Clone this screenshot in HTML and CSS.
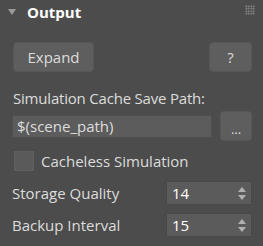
FILE: index.html
```html
<!DOCTYPE html>
<html lang="en">

<head>
    <meta charset="UTF-8">
    <meta name="viewport" content="width=device-width, initial-scale=1.0">
    <title>Output</title>
    <link rel="stylesheet" href="styles.css">
</head>

<body>
    <div class="rollout">
        <div class="rollout-header">
            <span class="arrow"></span>
            <span class="title">Output</span>
            <span class="grip"></span>
        </div>

        <div class="rollout-body">
            <div class="btn-row">
                <button class="btn btn-expand">Expand</button>
                <button class="btn btn-help">?</button>
            </div>

            <div class="field-label">Simulation Cache Save Path:</div>
            <div class="path-row">
                <input class="path-input" type="text" value="$(scene_path)">
                <button class="btn btn-browse">...</button>
            </div>

            <label class="check-row">
                <span class="checkbox"></span>
                <span>Cacheless Simulation</span>
            </label>

            <div class="spin-row">
                <span class="spin-label">Storage Quality</span>
                <div class="spinner">
                    <span class="spin-value">14</span>
                    <span class="spin-arrows"><i class="up"></i><i class="down"></i></span>
                </div>
            </div>

            <div class="spin-row">
                <span class="spin-label">Backup Interval</span>
                <div class="spinner">
                    <span class="spin-value">15</span>
                    <span class="spin-arrows"><i class="up"></i><i class="down"></i></span>
                </div>
            </div>
        </div>
    </div>
</body>

</html>
```

FILE: styles.css
```css
/* Reset */
* {
    margin: 0;
    padding: 0;
    box-sizing: border-box;
}

body {
    font-family: 'Open Sans', 'Noto Sans', sans-serif;
    font-size: 15px;
    color: #dcdcdc;
    background-color: #4c4c4c;
    width: 263px;
    height: 246px;
    overflow: hidden;
}

/* Header */
.rollout-header {
    display: flex;
    align-items: center;
    height: 23px;
    padding-left: 8px;
    padding-right: 8px;
}

.arrow {
    width: 0;
    height: 0;
    border-left: 4px solid transparent;
    border-right: 4px solid transparent;
    border-top: 6px solid #9a9a9a;
    margin-right: 11px;
}

.title {
    font-weight: bold;
    font-size: 15px;
    color: #ffffff;
    flex: 1;
}

.grip {
    width: 10px;
    height: 10px;
    background-image: radial-gradient(#8c8c8c 45%, transparent 50%);
    background-size: 2.5px 2.5px;
    margin-top: -4px;
}

/* Body */
.rollout-body {
    padding: 19px 11px 0 12px;
}

.btn {
    font-family: inherit;
    font-size: 15px;
    color: #dcdcdc;
    background-color: #5e5e5e;
    border: 1px solid #575757;
    border-radius: 4px;
    cursor: pointer;
}

.btn-row {
    display: flex;
    justify-content: space-between;
    padding-left: 1px;
}

.btn-expand {
    width: 81px;
    height: 30px;
}

.btn-help {
    width: 43px;
    height: 30px;
}

.field-label {
    margin-top: 15px;
    line-height: 22px;
    padding-left: 1px;
    letter-spacing: -0.2px;
}

.path-row {
    display: flex;
    align-items: center;
    justify-content: space-between;
    margin-top: 2px;
}

.path-input {
    width: 200px;
    height: 23px;
    font-family: inherit;
    font-size: 15px;
    color: #dcdcdc;
    background-color: #5c5c5c;
    border: 1px solid #505050;
    padding-left: 4px;
    outline: none;
}

.btn-browse {
    width: 32px;
    height: 30px;
    font-size: 13px;
    padding-top: 6px;
}

/* Checkbox */
.check-row {
    display: flex;
    align-items: center;
    margin-top: 10px;
    padding-left: 2px;
    height: 20px;
}

.checkbox {
    width: 20px;
    height: 20px;
    background-color: #5a5a5a;
    border: 1px solid #5f5f5f;
    margin-right: 7px;
}

/* Spinners */
.spin-row {
    display: flex;
    align-items: center;
    justify-content: space-between;
    margin-top: 10px;
}

.spin-row + .spin-row {
    margin-top: 8px;
}

.spinner {
    display: flex;
    align-items: center;
    justify-content: space-between;
    width: 86px;
    height: 24px;
    background-color: #5b5b5b;
    border: 1px solid #484848;
    padding-left: 5px;
    padding-right: 5px;
}

.spin-value {
    color: #ffffff;
}

.spin-arrows {
    display: flex;
    flex-direction: column;
    gap: 3px;
}

.spin-arrows i {
    display: block;
    width: 0;
    height: 0;
    border-left: 4.5px solid transparent;
    border-right: 4.5px solid transparent;
}

.spin-arrows .up {
    border-bottom: 5px solid #b0b0b0;
}

.spin-arrows .down {
    border-top: 5px solid #b0b0b0;
}
```
